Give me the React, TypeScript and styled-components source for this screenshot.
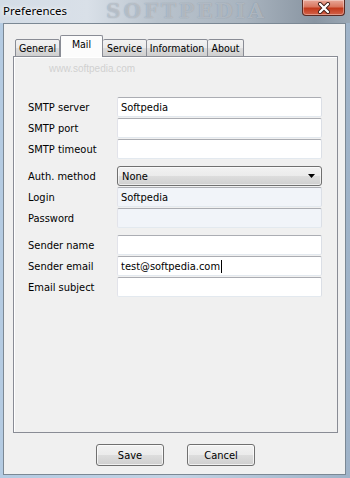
import React from "react";
import styled, { createGlobalStyle } from "styled-components";

const Global = createGlobalStyle`
  html, body { margin: 0; padding: 0; }
  body { width: 350px; height: 478px; overflow: hidden; background: #b7cbe0; }
  * { box-sizing: border-box; }
`;

const UI_FONT = `"DejaVu Sans Condensed", "DejaVu Sans", Tahoma, sans-serif`;

const Window = styled.div`
  width: 350px;
  height: 478px;
  display: flex;
  flex-direction: column;
  background: linear-gradient(to right, #b4cbe2 0%, #c3d3e4 50%, #9fb3c8 100%);
`;

const TitleBar = styled.div`
  position: relative;
  height: 23px;
  flex: none;
  display: flex;
  align-items: flex-start;
  padding-left: 3px;
  background: linear-gradient(
    to right,
    #d3dce6 0%,
    #d9e0e8 25%,
    #b9c3cd 45%,
    #a9b4bf 70%,
    #8995a2 90%,
    #9aa7b4 100%
  );
`;

const TitleText = styled.span`
  position: relative;
  z-index: 1;
  margin-top: 3px;
  font-family: "Noto Sans", "Open Sans", sans-serif;
  font-size: 11.5px;
  color: #000;
  text-shadow: 0 0 6px #fff, 0 0 3px #fff;
`;

const TitleWatermark = styled.span`
  position: absolute;
  left: 106px;
  top: 0;
  height: 23px;
  line-height: 23px;
  font-family: "DejaVu Serif", "Liberation Serif", serif;
  font-weight: bold;
  font-size: 20px;
  letter-spacing: 3px;
  color: rgba(225, 232, 240, 0.45);
  text-shadow: 0 0 1px rgba(90, 100, 112, 0.5);
  pointer-events: none;
`;

const CloseButton = styled.div`
  margin-left: auto;
  margin-right: 5px;
  width: 43px;
  height: 16px;
  border: 1px solid #5a2a22;
  border-top: none;
  border-radius: 0 0 4px 4px;
  background: linear-gradient(to bottom, #e8a798 0%, #d9775f 45%, #c2391b 55%, #d2634a 100%);
  box-shadow: inset 0 0 0 1px rgba(255, 255, 255, 0.35);
  display: flex;
  align-items: center;
  justify-content: center;
  position: relative;
  z-index: 1;
`;

const Client = styled.div`
  flex: 1;
  margin: 0 4px 3px 3px;
  border: 1px solid #7b8894;
  background: #f0f0f0;
  display: flex;
  flex-direction: column;
  padding: 11px 7px 7px 9px;
  font-family: ${UI_FONT};
  font-size: 11px;
  color: #000;
`;

const TabStrip = styled.div`
  display: flex;
  align-items: flex-end;
  padding-left: 2px;
  height: 22px;
  position: relative;
  z-index: 2;
  margin-bottom: -1px;
`;

const Tab = styled.div<{ $active?: boolean; $w: number }>`
  width: ${(p) => p.$w}px;
  height: ${(p) => (p.$active ? 22 : 18)}px;
  display: flex;
  justify-content: center;
  align-items: ${(p) => (p.$active ? "flex-start" : "center")};
  padding-top: ${(p) => (p.$active ? "2px" : "0")};
  border: 1px solid #898c95;
  border-bottom: ${(p) => (p.$active ? "none" : "1px solid #898c95")};
  border-left: ${(p) => (p.$active ? "1px solid #898c95" : "none")};
  border-radius: 2px 2px 0 0;
  background: ${(p) =>
    p.$active ? "#fcfcfc" : "linear-gradient(to bottom, #f2f2f2 0%, #ebebeb 50%, #dddddd 51%, #cfcfcf 100%)"};
  font-size: 10.5px;
  white-space: nowrap;
  &:first-child { border-left: 1px solid #898c95; }
`;

const Panel = styled.div`
  flex: none;
  height: 377px;
  border: 1px solid #898c95;
  background: #f0f0f0;
  box-shadow: inset 1px 1px 0 #fff;
  display: flex;
  flex-direction: column;
  padding: 6px 12px 0 14px;
`;

const Watermark = styled.div`
  padding-left: 21px;
  font-family: "Liberation Sans", Arial, sans-serif;
  font-size: 10px;
  color: #d0d0d0;
  height: 34px;
`;

const FormGroup = styled.div`
  display: grid;
  grid-template-columns: 89px 205px;
  grid-auto-rows: 20px;
  row-gap: 1px;
  margin-bottom: 7px;
  &:last-child { margin-bottom: 0; }
`;

const Label = styled.div`
  display: flex;
  align-items: center;
`;

const TextBox = styled.div<{ $disabled?: boolean }>`
  border: 1px solid;
  border-color: #abadb3 #dbdfe6 #e3e9ef #e2e3ea;
  border-radius: 2px;
  background: ${(p) => (p.$disabled ? "#f1f4f9" : "#ffffff")};
  display: flex;
  align-items: center;
  padding-left: 3px;
  white-space: nowrap;
`;

const Caret = styled.span`
  display: inline-block;
  width: 1px;
  height: 13px;
  background: #000;
  margin-left: 1px;
`;

const Combo = styled.div`
  border: 1px solid #707070;
  border-radius: 3px;
  background: linear-gradient(to bottom, #f2f2f2 0%, #ebebeb 50%, #dddddd 51%, #cfcfcf 100%);
  box-shadow: inset 0 0 0 1px rgba(255, 255, 255, 0.6);
  display: flex;
  align-items: center;
  padding: 0 6px 0 4px;
  justify-content: space-between;
`;

const ButtonRow = styled.div`
  display: flex;
  justify-content: center;
  gap: 23px;
  margin-top: 11px;
`;

const Button = styled.div`
  width: 68px;
  height: 22px;
  border: 1px solid #707070;
  border-radius: 3px;
  background: linear-gradient(to bottom, #f2f2f2 0%, #ebebeb 50%, #dddddd 51%, #cfcfcf 100%);
  box-shadow: inset 0 0 0 1px rgba(255, 255, 255, 0.7);
  display: flex;
  align-items: center;
  justify-content: center;
`;

const tabs = [
  { label: "General", w: 45 },
  { label: "Mail", w: 43, active: true },
  { label: "Service", w: 44 },
  { label: "Information", w: 61 },
  { label: "About", w: 36 },
];

export default function App() {
  return (
    <>
      <Global />
      <Window>
        <TitleBar>
          <TitleText>Preferences</TitleText>
          <TitleWatermark>SOFTPEDIA</TitleWatermark>
          <CloseButton>
            <svg width="14" height="12" viewBox="0 0 14 12">
              <path d="M3 2 L11 10 M11 2 L3 10" stroke="#3a1a14" strokeWidth="4" strokeLinecap="round" />
              <path d="M3 2 L11 10 M11 2 L3 10" stroke="#ffffff" strokeWidth="2.4" strokeLinecap="round" />
            </svg>
          </CloseButton>
        </TitleBar>
        <Client>
          <TabStrip>
            {tabs.map((t) => (
              <Tab key={t.label} $w={t.w} $active={t.active}>
                {t.label}
              </Tab>
            ))}
          </TabStrip>
          <Panel>
            <Watermark>www.softpedia.com</Watermark>
            <FormGroup>
              <Label>SMTP server</Label>
              <TextBox>Softpedia</TextBox>
              <Label>SMTP port</Label>
              <TextBox />
              <Label>SMTP timeout</Label>
              <TextBox />
            </FormGroup>
            <FormGroup>
              <Label>Auth. method</Label>
              <Combo>
                <span>None</span>
                <svg width="7" height="4" viewBox="0 0 7 4">
                  <path d="M0 0 H7 L3.5 4 Z" fill="#000" />
                </svg>
              </Combo>
              <Label>Login</Label>
              <TextBox $disabled>Softpedia</TextBox>
              <Label>Password</Label>
              <TextBox $disabled />
            </FormGroup>
            <FormGroup>
              <Label>Sender name</Label>
              <TextBox />
              <Label>Sender email</Label>
              <TextBox>
                test@softpedia.com
                <Caret />
              </TextBox>
              <Label>Email subject</Label>
              <TextBox />
            </FormGroup>
          </Panel>
          <ButtonRow>
            <Button>Save</Button>
            <Button>Cancel</Button>
          </ButtonRow>
        </Client>
      </Window>
    </>
  );
}
